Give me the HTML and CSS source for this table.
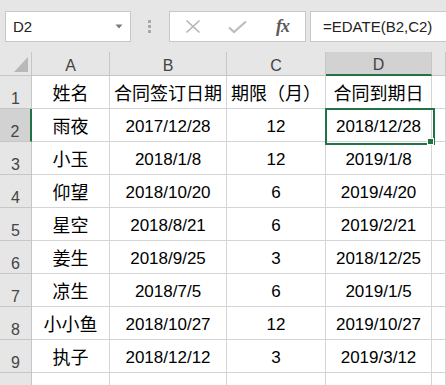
FILE: index.html
```html
<!DOCTYPE html>
<html lang="zh-CN">
<head>
<meta charset="utf-8">
<title>EDATE</title>
<link rel="stylesheet" href="styles.css">
</head>
<body>
<div class="toolbar">
  <div class="namebox">
    <span class="name">D2</span>
    <svg class="dd" width="8" height="5" viewBox="0 0 8 5"><path d="M0.5 0.5 L7.5 0.5 L4 4.5 Z" fill="#7a7a7a"/></svg>
  </div>
  <div class="grip"><i></i><i></i><i></i></div>
  <div class="fbtns">
    <span class="fbtn"><svg width="16" height="15" viewBox="0 0 16 15"><path d="M1.5 1.5 L14.5 13.5 M14.5 1.5 L1.5 13.5" stroke="#b4b4b4" stroke-width="1.6" fill="none"/></svg></span>
    <span class="fbtn"><svg width="19" height="14" viewBox="0 0 19 14"><path d="M1 7.5 L6 12 L18 1.5" stroke="#bdbdbd" stroke-width="2.2" fill="none"/></svg></span>
    <span class="fbtn fx">fx</span>
  </div>
  <div class="formula">=EDATE(B2,C2)</div>
</div>
<div class="sheet">
  <div class="hd corner"><svg width="14" height="15" viewBox="0 0 14 15"><path d="M14 0 L14 15 L0 15 Z" fill="#b8b8b8"/></svg></div>
  <div class="hd col">A</div>
  <div class="hd col">B</div>
  <div class="hd col">C</div>
  <div class="hd col sel">D</div>
  <div class="hd col"></div>

  <div class="hd row">1</div>
  <div class="c zh">姓名</div>
  <div class="c zh">合同签订日期</div>
  <div class="c zh">期限（月）</div>
  <div class="c zh">合同到期日</div>
  <div class="c"></div>

  <div class="hd row sel">2</div>
  <div class="c zh">雨夜</div>
  <div class="c">2017/12/28</div>
  <div class="c">12</div>
  <div class="c active">2018/12/28</div>
  <div class="c"></div>

  <div class="hd row">3</div>
  <div class="c zh">小玉</div>
  <div class="c">2018/1/8</div>
  <div class="c">12</div>
  <div class="c">2019/1/8</div>
  <div class="c"></div>

  <div class="hd row">4</div>
  <div class="c zh">仰望</div>
  <div class="c">2018/10/20</div>
  <div class="c">6</div>
  <div class="c">2019/4/20</div>
  <div class="c"></div>

  <div class="hd row">5</div>
  <div class="c zh">星空</div>
  <div class="c">2018/8/21</div>
  <div class="c">6</div>
  <div class="c">2019/2/21</div>
  <div class="c"></div>

  <div class="hd row">6</div>
  <div class="c zh">姜生</div>
  <div class="c">2018/9/25</div>
  <div class="c">3</div>
  <div class="c">2018/12/25</div>
  <div class="c"></div>

  <div class="hd row">7</div>
  <div class="c zh">凉生</div>
  <div class="c">2018/7/5</div>
  <div class="c">6</div>
  <div class="c">2019/1/5</div>
  <div class="c"></div>

  <div class="hd row">8</div>
  <div class="c zh">小小鱼</div>
  <div class="c">2018/10/27</div>
  <div class="c">12</div>
  <div class="c">2019/10/27</div>
  <div class="c"></div>

  <div class="hd row">9</div>
  <div class="c zh">执子</div>
  <div class="c">2018/12/12</div>
  <div class="c">3</div>
  <div class="c">2019/3/12</div>
  <div class="c"></div>

  <div class="hd row"></div>
  <div class="c"></div>
  <div class="c"></div>
  <div class="c"></div>
  <div class="c"></div>
  <div class="c"></div>
</div>
</body>
</html>
```
FILE: styles.css
```css
* { box-sizing: border-box; }
html, body { margin: 0; padding: 0; }
body {
  width: 446px;
  height: 385px;
  overflow: hidden;
  background: #ffffff;
  font-family: "Liberation Sans", "Noto Sans CJK SC", sans-serif;
  color: #000;
}
.toolbar {
  height: 52px;
  background: #e6e6e6;
  display: flex;
  align-items: flex-start;
  padding-top: 11px;
  overflow: hidden;
}
.namebox {
  margin-left: 5px;
  width: 126px;
  height: 31px;
  background: #fff;
  border: 1px solid #c8c8c8;
  display: flex;
  align-items: center;
  padding-left: 7px;
  padding-right: 7px;
}
.name {
  flex: 1;
  font-size: 15px;
  color: #222;
  line-height: 18px;
}
.dd { display: block; }
.grip {
  margin-left: 17px;
  width: 3px;
  height: 31px;
  display: flex;
  flex-direction: column;
  justify-content: center;
  gap: 2px;
}
.grip i {
  display: block;
  width: 3px;
  height: 3px;
  background: #a8a8a8;
}
.fbtns {
  margin-left: 18px;
  width: 137px;
  height: 31px;
  background: #fff;
  border: 1px solid #c8c8c8;
  display: flex;
}
.fbtn {
  width: 45px;
  display: flex;
  align-items: center;
  justify-content: center;
}
.fbtn svg { display: block; }
.fx {
  font-family: "Liberation Serif", serif;
  font-style: italic;
  font-weight: bold;
  font-size: 18px;
  color: #5a5a5a;
  letter-spacing: -1px;
}
.formula {
  flex: 1;
  margin-left: 4px;
  margin-right: -4px;
  height: 31px;
  background: #fff;
  border: 1px solid #c8c8c8;
  padding-left: 12px;
  font-size: 15px;
  line-height: 29px;
  color: #222;
  white-space: nowrap;
}
.sheet {
  display: grid;
  grid-template-columns: 32px 78px 117px 99px 106px 1fr;
  grid-template-rows: 24px;
  grid-auto-rows: 33px;
}
.c, .hd {
  border-right: 1px solid #d4d4d4;
  border-bottom: 1px solid #d4d4d4;
  display: flex;
  justify-content: center;
  align-items: flex-end;
  white-space: nowrap;
  overflow: visible;
}
.c {
  font-size: 17px;
  line-height: 20px;
  padding-bottom: 4px;
}
.c.zh { font-size: 18px; }
.hd {
  background: #e6e6e6;
  border-color: #c6c6c6;
  color: #444;
  font-size: 16px;
  line-height: 18px;
}
.hd.col.sel {
  background: #d2d2d2;
  border-bottom: 2px solid #217346;
}
.hd.row.sel {
  background: #d2d2d2;
  border-right: 2px solid #217346;
}
.corner {
  justify-content: flex-end;
  align-items: flex-end;
  padding: 0 3px 3px 0;
}
.corner svg { display: block; }
.active { position: relative; }
.active::after {
  content: "";
  position: absolute;
  left: -1px;
  top: -1px;
  width: calc(100% + 1px);
  height: calc(100% + 1px);
  border: 2px solid #217346;
  z-index: 2;
}
.active::before {
  content: "";
  position: absolute;
  right: -3px;
  bottom: -4px;
  width: 5px;
  height: 5px;
  box-sizing: content-box;
  background: #217346;
  border: 1px solid #fff;
  z-index: 3;
}
```
